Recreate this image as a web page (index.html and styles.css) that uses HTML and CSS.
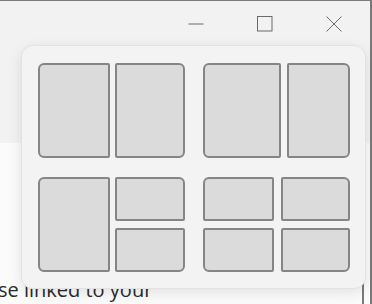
FILE: index.html
```html
<!DOCTYPE html>
<html>
<head>
<meta charset="utf-8">
<link rel="stylesheet" href="styles.css">
</head>
<body>
<div class="window">
  <div class="titlebar">
    <div class="cap">
      <svg width="16" height="16" viewBox="0 0 16 16"><line x1="0.5" y1="8" x2="15.5" y2="8" class="ic"/></svg>
    </div>
    <div class="cap">
      <svg width="16" height="16" viewBox="0 0 16 16"><rect x="0.5" y="0.5" width="14.5" height="14.5" class="ic"/></svg>
    </div>
    <div class="cap">
      <svg width="16" height="16" viewBox="0 0 16 16"><line x1="0.5" y1="0.5" x2="15.5" y2="15.5" class="ic"/><line x1="15.5" y1="0.5" x2="0.5" y2="15.5" class="ic"/></svg>
    </div>
  </div>
  <div class="content">
    <p class="line">se linked to your</p>
  </div>
  <div class="scrollmark"></div>
</div>

<div class="flyout">
  <div class="group g1">
    <div class="zone r-l"></div>
    <div class="zone r-r"></div>
  </div>
  <div class="group g2">
    <div class="zone r-l"></div>
    <div class="zone r-r"></div>
  </div>
  <div class="group g3">
    <div class="zone r-l tall"></div>
    <div class="zone r-tr"></div>
    <div class="zone r-br"></div>
  </div>
  <div class="group g4">
    <div class="zone r-tl"></div>
    <div class="zone r-tr"></div>
    <div class="zone r-bl"></div>
    <div class="zone r-br"></div>
  </div>
</div>
</body>
</html>
```

FILE: styles.css
```css
* { box-sizing: border-box; }
html, body {
  margin: 0;
  padding: 0;
  width: 372px;
  height: 304px;
  overflow: hidden;
  background: #ffffff;
  font-family: "Open Sans", "Noto Sans", sans-serif;
}
.window {
  position: relative;
  width: 372px;
  height: 304px;
  border-top: 1px solid #7c7c7c;
  border-right: 2px solid #7a7a7a;
  background: #fbfbfb;
  display: flex;
  flex-direction: column;
}
.titlebar {
  height: 144px;
  background: #f2f2f2;
  display: flex;
  justify-content: flex-end;
  align-items: flex-start;
  padding-right: 2px;
}
.cap {
  width: 69px;
  height: 46px;
  display: flex;
  align-items: center;
  justify-content: center;
}
.cap svg { display: block; }
.ic {
  fill: none;
  stroke: #6a6a6a;
  stroke-width: 1;
}
.content {
  flex: 1;
  background: #fbfbfb;
  position: relative;
}
.line {
  margin: 0;
  padding-top: 133px;
  margin-left: -2px;
  font-size: 20px;
  line-height: 28px;
  color: #2a2a2a;
  white-space: nowrap;
}
.scrollmark {
  position: absolute;
  right: 6px;
  top: 282px;
  width: 2px;
  height: 30px;
  background: #7a7a7a;
}
.flyout {
  position: absolute;
  left: 21px;
  top: 45px;
  width: 345px;
  height: 244px;
  background: #f3f3f3;
  border: 1px solid #e2e2e2;
  border-radius: 12px;
  box-shadow: 0 4px 14px rgba(0, 0, 0, 0.10);
  padding: 17px 15px 16px 16px;
  display: grid;
  grid-template-columns: 147px 147px;
  grid-template-rows: 95px 95px;
  column-gap: 18px;
  row-gap: 19px;
}
.group { display: grid; }
.g1 { grid-template-columns: 72px 70px; column-gap: 5px; }
.g2 { grid-template-columns: 78px 63px; column-gap: 6px; }
.g3 {
  grid-template-columns: 72px 70px;
  grid-template-rows: 44px 44px;
  column-gap: 5px;
  row-gap: 7px;
}
.g3 .tall { grid-row: 1 / 3; }
.g4 {
  grid-template-columns: 71px 69px;
  grid-template-rows: 44px 44px;
  column-gap: 7px;
  row-gap: 7px;
}
.zone {
  background: #dbdbdb;
  border: 2px solid #858585;
}
.r-l { border-radius: 6px 2px 2px 6px; }
.r-r { border-radius: 2px 6px 6px 2px; }
.r-tl { border-radius: 6px 2px 2px 2px; }
.r-tr { border-radius: 2px 6px 2px 2px; }
.r-bl { border-radius: 2px 2px 2px 6px; }
.r-br { border-radius: 2px 2px 6px 2px; }
```
